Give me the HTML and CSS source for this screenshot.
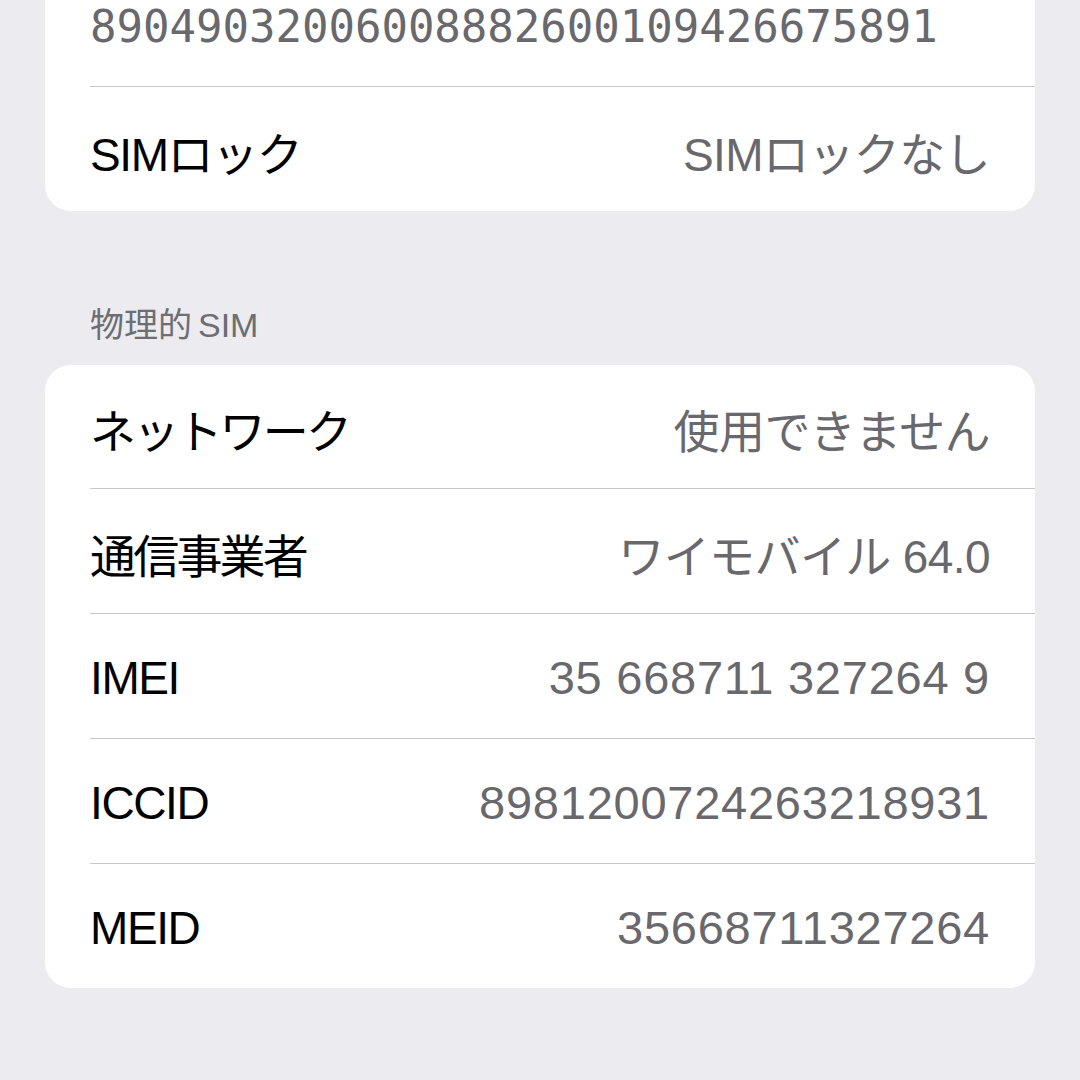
FILE: index.html
```html
<!DOCTYPE html>
<html lang="ja">
  <head>
    <meta charset="utf-8">
    <title>情報</title>
    <link rel="stylesheet" href="styles.css">
  </head>
  <body>
    <div class="screen">
      <div class="group group-top">
        <div class="row row-first">
          <div class="row-body">
            <span class="value mono">89049032006008882600109426675891</span>
          </div>
        </div>
        <div class="row">
          <div class="row-body">
            <span class="label">SIMロック</span>
            <span class="value">SIMロックなし</span>
          </div>
        </div>
      </div>

      <div class="section-title">物理的<span class="gap">SIM</span></div>

      <div class="group">
        <div class="row row-first">
          <div class="row-body">
            <span class="label cjk">ネットワーク</span>
            <span class="value">使用できません</span>
          </div>
        </div>
        <div class="row">
          <div class="row-body">
            <span class="label cjk">通信事業者</span>
            <span class="value">ワイモバイル 64.0</span>
          </div>
        </div>
        <div class="row">
          <div class="row-body">
            <span class="label">IMEI</span>
            <span class="value num">35 668711 327264 9</span>
          </div>
        </div>
        <div class="row">
          <div class="row-body">
            <span class="label">ICCID</span>
            <span class="value num">8981200724263218931</span>
          </div>
        </div>
        <div class="row">
          <div class="row-body">
            <span class="label">MEID</span>
            <span class="value num">35668711327264</span>
          </div>
        </div>
      </div>
    </div>
  </body>
</html>
```

FILE: styles.css
```css
html,
body
{
  margin: 0;
  height: 100%;
  overflow: hidden;
}

body
{
  background-color: #ebebf0;
  font-family: "Liberation Sans", "Noto Sans CJK JP", sans-serif;
  color: #000;
}

.screen
{
  padding: 0 45px;
}

.group
{
  background-color: #fff;
  border-radius: 26px;
  overflow: hidden;
}

.group-top
{
  margin-top: -37px;
}

.row
{
  padding-left: 45px;
}

.row-body
{
  box-sizing: border-box;
  height: 125px;
  padding-top: 3px;
  padding-right: 45px;
  border-top: 1px solid #c8c8cc;
  display: flex;
  align-items: center;
  justify-content: space-between;
}

.row-first .row-body
{
  height: 123px;
  border-top: none;
}

.label
{
  font-size: 46px;
  letter-spacing: -1.4px;
}

.label.cjk
{
  letter-spacing: -2.8px;
}

.value
{
  font-size: 46px;
  letter-spacing: -0.6px;
  color: #68686d;
}

.value.num
{
  font-size: 47px;
  letter-spacing: 0.75px;
}

.value.mono
{
  font-family: "DejaVu Sans Mono", "Liberation Mono", monospace;
  font-size: 44px;
  letter-spacing: 0;
}

.section-title
{
  padding: 94px 0 20px 45px;
  font-size: 34px;
  line-height: 40px;
  color: #6d6d72;
}

.section-title .gap
{
  margin-left: 6px;
}
```
